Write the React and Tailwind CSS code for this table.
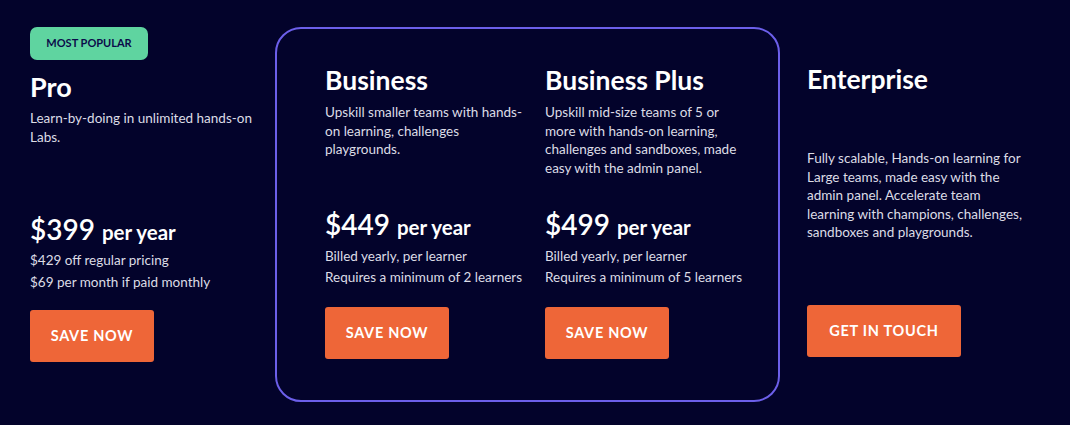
import React from 'react'

const font = { fontFamily: 'Lato, "Noto Sans", sans-serif' }

function SaveButton({ children, wide }) {
  return (
    <button className={`h-[52px] rounded-[3px] bg-[#ee6638] text-white text-[14.5px] font-bold tracking-[0.05em] uppercase ${wide ? 'w-[154px]' : 'w-[124px]'}`}>
      {children}
    </button>
  )
}

function Price({ amount, lines, lh }) {
  return (
    <div>
      <div className="flex items-baseline gap-[7px] text-white leading-none h-[28px]">
        <span className="text-[28px] font-semibold">{amount}</span>
        <span className="text-[20.5px] font-bold">per year</span>
      </div>
      <div className={`text-[13.5px] text-[#dcdce6] ${lh}`}>
        {lines.map(l => <p key={l}>{l}</p>)}
      </div>
    </div>
  )
}

function Plan({ title, desc, price, lines }) {
  return (
    <div className="w-[200px] flex flex-col">
      <h2 className="mt-[38px] text-[26.5px] font-bold text-white leading-none h-[26px]">{title}</h2>
      <p className="mt-[10px] h-[88px] text-[13.5px] leading-[18.5px] text-[#dcdce6]">{desc}</p>
      <div className="mt-[19px]">
        <Price amount={price} lines={lines} lh="mt-[8px] leading-[21px]" />
      </div>
      <div className="mt-[19px]"><SaveButton>Save now</SaveButton></div>
    </div>
  )
}

export default function App() {
  return (
    <div className="w-[1070px] h-[425px] bg-[#03032b] flex pl-[30px] pt-[27px]" style={font}>
      <div className="w-[245px] flex flex-col">
        <span className="self-start h-[33px] w-[118px] flex items-center justify-center rounded-[7px] bg-[#5fd4a0] text-[#0b0b4a] text-[11px] font-bold">
          MOST POPULAR
        </span>
        <h2 className="mt-[13px] h-[27px] text-[27px] font-bold text-white leading-none">Pro</h2>
        <p className="mt-[9px] h-[86px] pr-[10px] text-[13.5px] leading-[18.5px] text-[#dcdce6]">
          Learn-by-doing in unlimited hands-on Labs.
        </p>
        <div className="mt-[20px]">
          <Price amount="$399" lines={['$429 off regular pricing', '$69 per month if paid monthly']} lh="mt-[6px] leading-[22px]" />
        </div>
        <div className="mt-[17px]">
          <SaveButton>Save now</SaveButton>
        </div>
      </div>

      <div className="w-[505px] h-[375px] rounded-[26px] border-2 border-[#6c5fea] flex gap-[20px] pl-[48px]">
        <Plan
          title="Business"
          desc="Upskill smaller teams with hands-on learning, challenges playgrounds."
          price="$449"
          lines={['Billed yearly, per learner', 'Requires a minimum of 2 learners']}
        />
        <Plan
          title="Business Plus"
          desc="Upskill mid-size teams of 5 or more with hands-on learning, challenges and sandboxes, made easy with the admin panel."
          price="$499"
          lines={['Billed yearly, per learner', 'Requires a minimum of 5 learners']}
        />
      </div>

      <div className="ml-[27px] w-[221px] flex flex-col">
        <h2 className="mt-[39px] h-[26px] text-[26.5px] font-bold text-white leading-none">Enterprise</h2>
        <p className="mt-[57px] text-[13.5px] leading-[18.5px] text-[#dcdce6]">
          Fully scalable, Hands-on learning for Large teams, made easy with the admin panel. Accelerate team learning with champions, challenges, sandboxes and playgrounds.
        </p>
        <div className="mt-[63px]">
          <SaveButton wide>Get in touch</SaveButton>
        </div>
      </div>
    </div>
  )
}
